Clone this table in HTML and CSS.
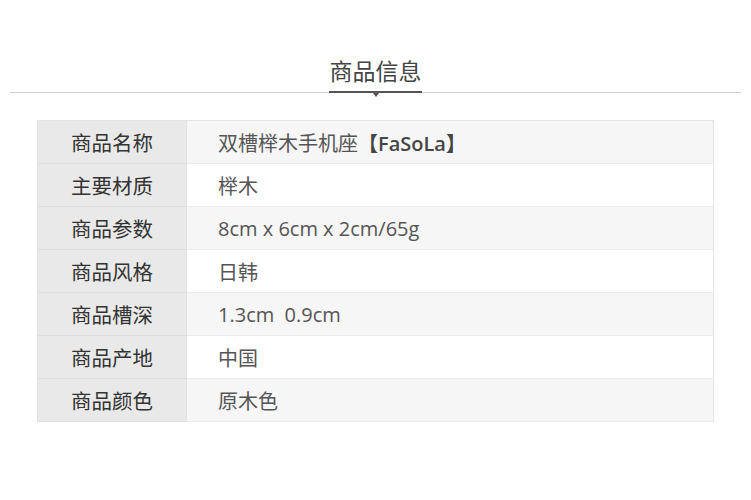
FILE: index.html
```html
<!DOCTYPE html>
<html lang="zh">
<head>
<meta charset="utf-8">
<link rel="stylesheet" href="styles.css">
</head>
<body>
<div class="page">
  <div class="heading">
    <h2 class="title">商品信息</h2>
  </div>
  <table class="spec">
    <tr><th>商品名称</th><td>双槽榉木手机座<b class="brand">【FaSoLa】</b></td></tr>
    <tr><th>主要材质</th><td>榉木</td></tr>
    <tr><th>商品参数</th><td>8cm x 6cm x 2cm/65g</td></tr>
    <tr><th>商品风格</th><td>日韩</td></tr>
    <tr><th>商品槽深</th><td>1.3cm&nbsp; 0.9cm</td></tr>
    <tr><th>商品产地</th><td>中国</td></tr>
    <tr><th>商品颜色</th><td>原木色</td></tr>
  </table>
</div>
</body>
</html>
```
FILE: styles.css
```css
html, body {
  margin: 0;
  padding: 0;
  background: #fff;
}
.page {
  width: 751px;
  height: 500px;
  font-family: "Open Sans", "Noto Sans CJK SC", sans-serif;
  overflow: hidden;
}
.heading {
  margin: 0 10px;
  padding-top: 56px;
  border-bottom: 1px solid #cfcfcf;
  display: flex;
  justify-content: center;
}
.title {
  position: relative;
  margin: 0 0 -1px 0;
  padding: 0 0 5px 0;
  width: 93px;
  text-align: center;
  font-size: 23px;
  line-height: 30px;
  font-weight: normal;
  color: #444;
  border-bottom: 2px solid #555;
}
.title::after {
  content: "";
  position: absolute;
  left: 50%;
  bottom: -6px;
  margin-left: -3px;
  border-left: 3px solid transparent;
  border-right: 3px solid transparent;
  border-top: 4px solid #555;
}
.spec {
  margin: 27px 0 0 37px;
  width: 677px;
  border-collapse: collapse;
  border: 1px solid #e3e3e3;
  font-size: 20px;
}
.spec tr {
  height: 43px;
}
.spec th {
  width: 148px;
  padding: 0;
  background: #e9e9e9;
  color: #333;
  font-weight: normal;
  font-size: 20.5px;
  text-align: center;
  border-bottom: 1px solid #dedede;
  border-right: 1px solid #e3e3e3;
}
.spec td {
  padding: 0 0 0 31px;
  color: #555;
  border-bottom: 1px solid #ececec;
  background: #fff;
}
.spec tr:nth-child(odd) td {
  background: #f6f6f6;
}
.brand {
  font-weight: 600;
  color: #444;
}
```
